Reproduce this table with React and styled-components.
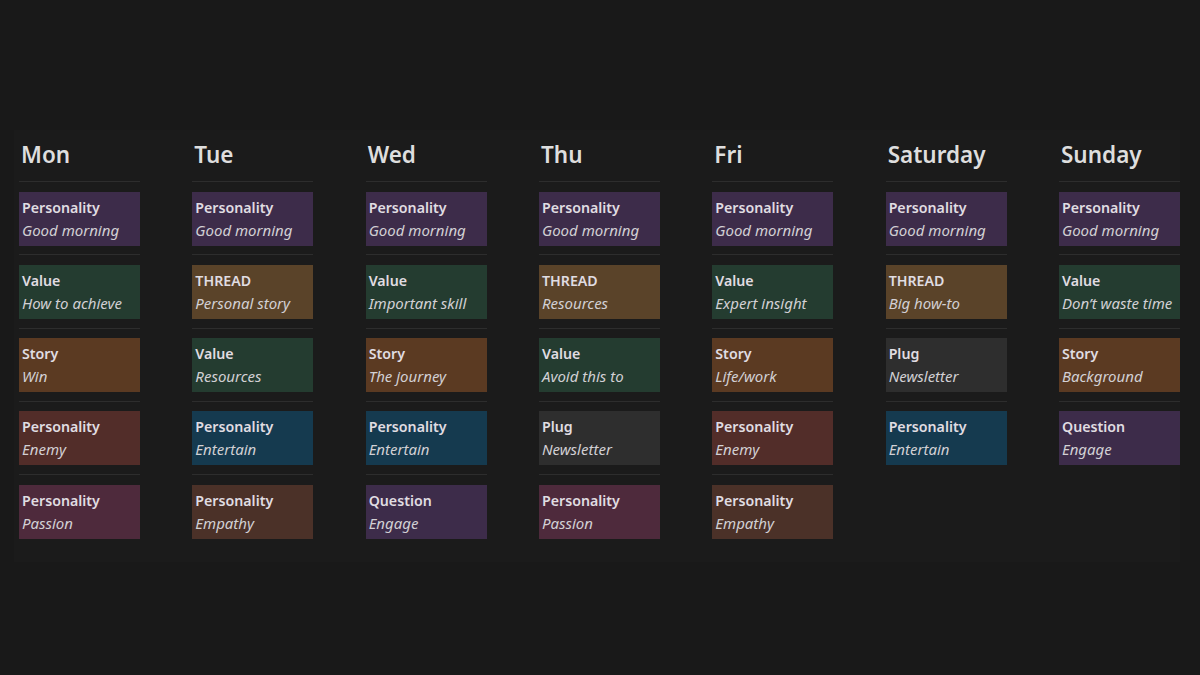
import React from "react";
import styled, { createGlobalStyle } from "styled-components";

const GlobalStyle = createGlobalStyle`
  html, body {
    margin: 0;
    padding: 0;
    background: #191919;
  }
  body {
    font-family: "Noto Sans", "Open Sans", sans-serif;
    color: #d8d8d8;
  }
`;

const colors = {
  purple: "#3d2c4a",
  green: "#243c30",
  yellow: "#5a4329",
  orange: "#5b3a22",
  red: "#522d29",
  pink: "#4e2a3c",
  blue: "#153a4f",
  brown: "#4b3128",
  gray: "#2e2e2e",
};

const week = [
  {
    day: "Mon",
    posts: [
      ["Personality", "Good morning", "purple"],
      ["Value", "How to achieve", "green"],
      ["Story", "Win", "orange"],
      ["Personality", "Enemy", "red"],
      ["Personality", "Passion", "pink"],
    ],
  },
  {
    day: "Tue",
    posts: [
      ["Personality", "Good morning", "purple"],
      ["THREAD", "Personal story", "yellow"],
      ["Value", "Resources", "green"],
      ["Personality", "Entertain", "blue"],
      ["Personality", "Empathy", "brown"],
    ],
  },
  {
    day: "Wed",
    posts: [
      ["Personality", "Good morning", "purple"],
      ["Value", "Important skill", "green"],
      ["Story", "The journey", "orange"],
      ["Personality", "Entertain", "blue"],
      ["Question", "Engage", "purple"],
    ],
  },
  {
    day: "Thu",
    posts: [
      ["Personality", "Good morning", "purple"],
      ["THREAD", "Resources", "yellow"],
      ["Value", "Avoid this to", "green"],
      ["Plug", "Newsletter", "gray"],
      ["Personality", "Passion", "pink"],
    ],
  },
  {
    day: "Fri",
    posts: [
      ["Personality", "Good morning", "purple"],
      ["Value", "Expert insight", "green"],
      ["Story", "Life/work", "orange"],
      ["Personality", "Enemy", "red"],
      ["Personality", "Empathy", "brown"],
    ],
  },
  {
    day: "Saturday",
    posts: [
      ["Personality", "Good morning", "purple"],
      ["THREAD", "Big how-to", "yellow"],
      ["Plug", "Newsletter", "gray"],
      ["Personality", "Entertain", "blue"],
    ],
  },
  {
    day: "Sunday",
    posts: [
      ["Personality", "Good morning", "purple"],
      ["Value", "Don\u2019t waste time", "green"],
      ["Story", "Background", "orange"],
      ["Question", "Engage", "purple"],
    ],
  },
];

const Board = styled.div`
  margin: 130px 0 0 14px;
  width: 1166px;
  height: 432px;
  box-sizing: border-box;
  padding: 0 0 0 5px;
  background: #1b1b1b;
  display: grid;
  grid-template-columns: repeat(7, 121px);
  column-gap: 52.33px;
  align-items: start;
`;

const Column = styled.div`
  display: flex;
  flex-direction: column;
`;

const DayTitle = styled.h2`
  margin: 0;
  padding: 10px 2px 0;
  height: 51px;
  box-sizing: border-box;
  font-size: 22.5px;
  line-height: 30px;
  font-weight: 600;
  color: #dedede;
  white-space: nowrap;
`;

const Divider = styled.div`
  height: 1px;
  background: #2d2d2d;
  margin: 0 0 9.5px;
`;

const Card = styled.div`
  height: 54px;
  box-sizing: border-box;
  padding: 4px 3px;
  margin-bottom: 8.8px;
  background: ${(p) => colors[p.$tone]};
  display: flex;
  flex-direction: column;
  overflow: hidden;
`;

const Kind = styled.div`
  font-size: 14.2px;
  line-height: 23px;
  font-weight: 600;
  color: #e0dde2;
  white-space: nowrap;
`;

const Topic = styled.div`
  font-size: 15px;
  line-height: 23px;
  font-style: italic;
  color: #d2d0d4;
  white-space: nowrap;
`;

export default function App() {
  return (
    <>
      <GlobalStyle />
      <Board>
        {week.map((col) => (
          <Column key={col.day}>
            <DayTitle>{col.day}</DayTitle>
            {col.posts.map(([kind, topic, tone], i) => (
              <React.Fragment key={i}>
                <Divider />
                <Card $tone={tone}>
                  <Kind>{kind}</Kind>
                  <Topic>{topic}</Topic>
                </Card>
              </React.Fragment>
            ))}
          </Column>
        ))}
      </Board>
    </>
  );
}
